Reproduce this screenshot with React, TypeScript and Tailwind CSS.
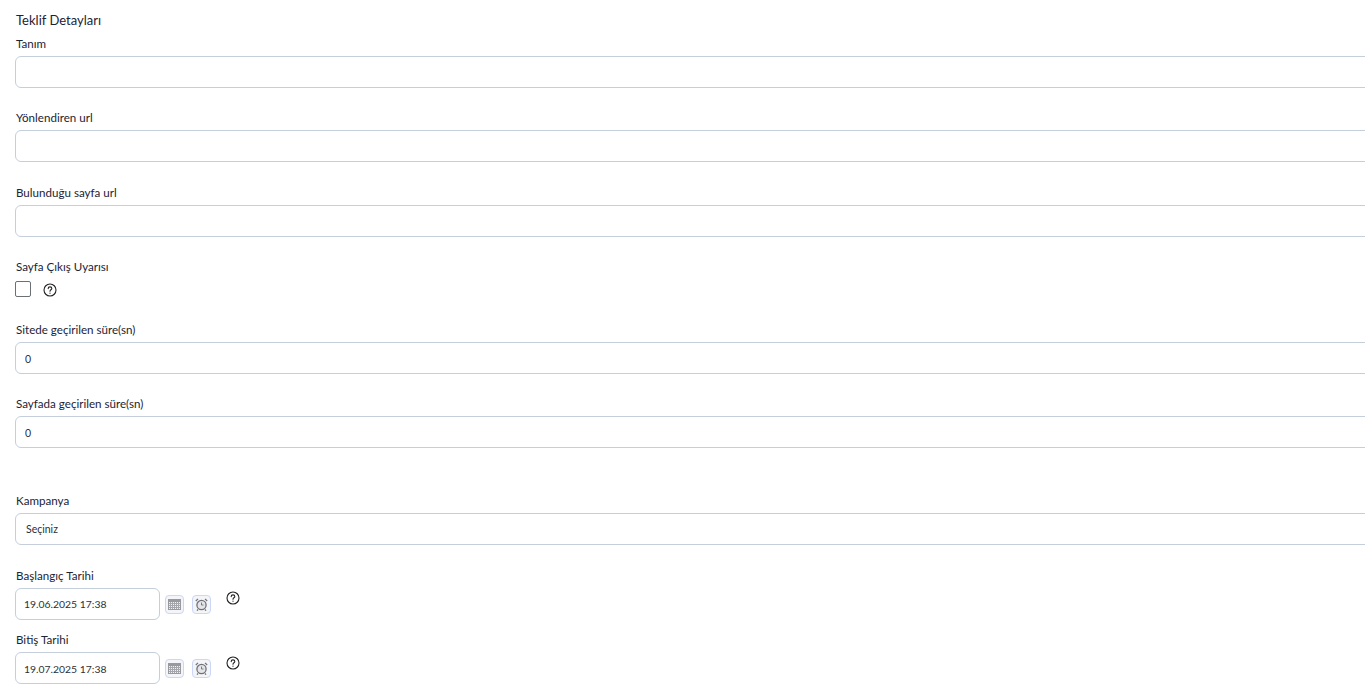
function HelpIcon({ className }: { className?: string }) {
  return (
    <svg viewBox="0 0 14 14" className={`h-[14px] w-[14px] ${className ?? ""}`} fill="none" stroke="#222" strokeWidth="1.1">
      <circle cx="7" cy="7" r="6" />
      <path d="M5.2 5.6c0-1.1.8-1.7 1.8-1.7s1.8.6 1.8 1.5c0 1.4-1.8 1.4-1.8 2.9" strokeLinecap="round" />
      <circle cx="7" cy="10.2" r=".6" fill="#222" stroke="none" />
    </svg>
  )
}

function CalendarButton() {
  return (
    <div className="flex h-[19px] w-[19px] items-center justify-center rounded-[4px] border border-[#ccd6f6] bg-[#f4f5f8]">
      <svg viewBox="0 0 13 11" className="h-[11px] w-[13px]">
        <rect x="0" y="0" width="13" height="11" fill="#97999e" />
        <rect x="1" y="3" width="11" height="7" fill="#f0f1f3" />
        <path d="M1 4.5h11M1 6.5h11M1 8.5h11M2.5 3v7M4.5 3v7M6.5 3v7M8.5 3v7M10.5 3v7" stroke="#a4a6ab" strokeWidth="1" />
      </svg>
    </div>
  )
}

function ClockButton() {
  return (
    <div className="flex h-[19px] w-[19px] items-center justify-center rounded-[4px] border border-[#ccd6f6] bg-[#f4f5f8]">
      <svg viewBox="0 0 13 13" className="h-[13px] w-[13px]" fill="none" stroke="#6f7176">
        <circle cx="6.5" cy="7" r="4.6" strokeWidth="1.3" fill="#e4e5e8" />
        <path d="M6.5 4.5V7h2" strokeWidth=".9" />
        <path d="M.8 3 3 .9M12.2 3 10 .9M3 11.5l-1 1.2M10 11.5l1 1.2" strokeWidth="1.2" />
      </svg>
    </div>
  )
}

function Label({ text }: { text: string }) {
  return <label className="block h-4 pl-px text-[11.6px] leading-4 text-[#1c2434]">{text}</label>
}

function TextField({ label, value, className, inputClass }: { label: string; value?: string; className: string; inputClass?: string }) {
  return (
    <div className={className}>
      <Label text={label} />
      <input
        readOnly
        value={value ?? ""}
        className={`mt-1 block h-8 w-[1400px] rounded-[6px] border border-[#c5cedb] bg-white pl-[9px] text-[10.5px] text-[#2b3038] outline-none ${inputClass ?? ""}`}
      />
    </div>
  )
}

function DateField({ label, value, className, inputClass, helpClass }: { label: string; value: string; className: string; inputClass?: string; helpClass: string }) {
  return (
    <div className={className}>
      <Label text={label} />
      <div className="mt-1 flex">
        <input
          readOnly
          value={value}
          className={`block h-8 w-[145px] rounded-[6px] border border-[#c5cedb] bg-white pl-[8px] text-[10.4px] text-[#2b3038] outline-none ${inputClass ?? ""}`}
        />
        <div className="ml-[5px] mt-[7px] flex gap-[8px]">
          <CalendarButton />
          <ClockButton />
        </div>
        <HelpIcon className={`ml-[15px] ${helpClass}`} />
      </div>
    </div>
  )
}

export default function App() {
  return (
    <div className="h-[686px] w-full overflow-hidden bg-white pl-[15px] pt-[13px] font-['Lato','Liberation_Sans',sans-serif]">
      <h2 className="h-[14px] pl-px text-[13px] leading-[14px] text-[#1c2434]">Teklif Detayları</h2>
      <div className="mt-[9px]">
        <TextField label="Tanım" className="mb-[22px]" />
        <TextField label="Yönlendiren url" className="mb-[23px]" />
        <TextField label="Bulunduğu sayfa url" className="mb-[22px]" />
        <div className="mb-[25px]">
          <Label text="Sayfa Çıkış Uyarısı" />
          <div className="mt-[6px] flex items-center">
            <div className="h-4 w-4 rounded-[2px] border border-[#6b6f76] bg-white" />
            <HelpIcon className="ml-[12px] mt-px" />
          </div>
        </div>
        <TextField label="Sitede geçirilen süre(sn)" value="0" className="mb-[22px]" inputClass="pt-[2px]" />
        <TextField label="Sayfada geçirilen süre(sn)" value="0" className="mb-[45px]" inputClass="pt-[2px]" />
        <TextField label="Kampanya" value="Seçiniz" className="mb-[23px]" inputClass="pl-[10px]" />
        <DateField label="Başlangıç Tarihi" value="19.06.2025 17:38" className="mb-[12px]" helpClass="mt-[3px]" />
        <DateField label="Bitiş Tarihi" value="19.07.2025 17:38" className="" inputClass="pt-[2px]" helpClass="mt-[4px]" />
      </div>
    </div>
  )
}
